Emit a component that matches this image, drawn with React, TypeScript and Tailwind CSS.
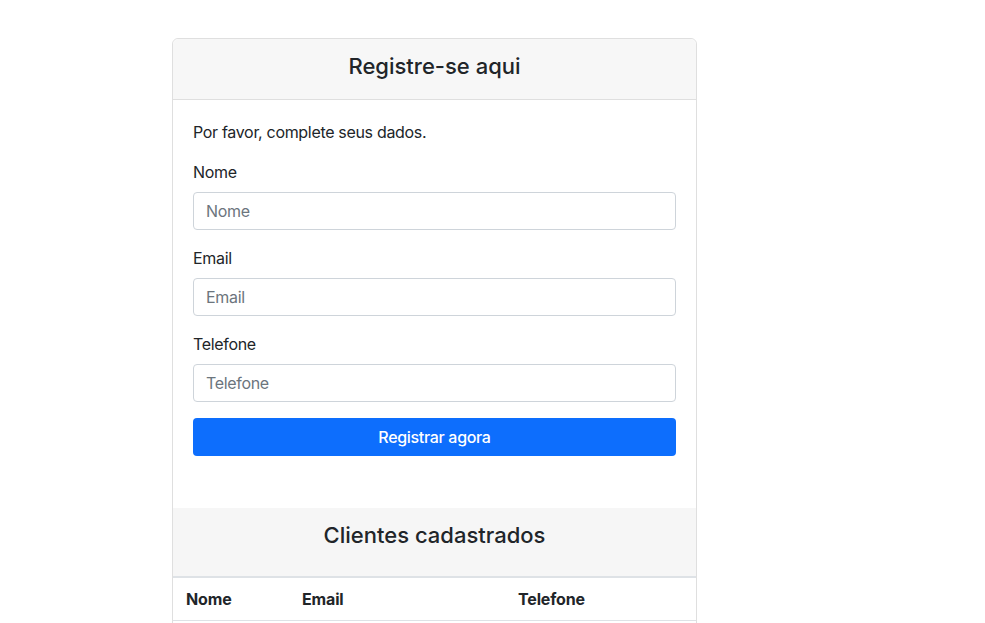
import React from 'react';

const fields = ['Nome', 'Email', 'Telefone'];

const App: React.FC = () => {
  return (
    <div className="min-h-screen bg-white text-[#212529] font-['Inter','Liberation_Sans',sans-serif] overflow-hidden h-[623px]">
      <div className="ml-[172px] mt-[38px] w-[525px] border border-[#dfdfdf] rounded-[6px]">
        <div className="h-[61px] flex items-center justify-center pb-[7px] bg-[#f7f7f7] border-b border-[#dfdfdf] rounded-t-[6px]">
          <h4 className="text-[22px] font-medium leading-[28px]">Registre-se aqui</h4>
        </div>

        <div className="px-5 pt-5 pb-[52px] tracking-[-0.02em]">
          <p className="text-base leading-6 mb-4">Por favor, complete seus dados.</p>
          <form onSubmit={(e) => e.preventDefault()}>
            {fields.map((f) => (
              <div key={f} className="mb-4">
                <label className="block text-base leading-6 mb-2">{f}</label>
                <input
                  type="text"
                  placeholder={f}
                  className="block w-full h-[38px] px-3 text-base tracking-[-0.02em] border border-[#ced4da] rounded-[4px] placeholder:text-[#6c757d] outline-none"
                />
              </div>
            ))}
            <button
              type="submit"
              className="w-full h-[38px] bg-[#0d6efd] text-white text-base font-medium tracking-[-0.02em] rounded-[4px]"
            >
              Registrar agora
            </button>
          </form>
        </div>

        <div className="h-[70px] flex items-center justify-center pb-[15px] bg-[#f6f6f6] border-b-2 border-[#dee2e6]">
          <h4 className="text-[22px] font-medium leading-[28px]">Clientes cadastrados</h4>
        </div>
        <div className="flex h-[43px] items-center border-b border-[#dee2e6] font-bold text-base tracking-[-0.01em]">
          <div className="w-[129px] pl-[13px]">Nome</div>
          <div className="w-[216px]">Email</div>
          <div className="flex-1">Telefone</div>
        </div>
        <div className="h-10" />
      </div>
    </div>
  );
};

export default App;
